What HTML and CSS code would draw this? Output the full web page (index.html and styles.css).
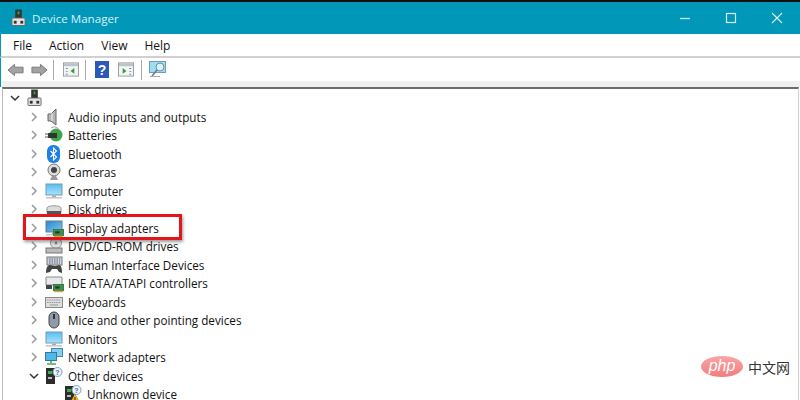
FILE: index.html
```html
<!DOCTYPE html>
<html lang="en">
<head>
  <meta charset="UTF-8" />
  <title>Device Manager</title>
  <link rel="stylesheet" href="styles.css">
</head>
<body>
  <svg class="defs" width="0" height="0">
    <defs>
      <linearGradient id="screen" x1="0" y1="0" x2="0" y2="1">
        <stop offset="0" stop-color="#59bdf0"/>
        <stop offset="1" stop-color="#a9e2fa"/>
      </linearGradient>
      <linearGradient id="screen-dark" x1="0" y1="0" x2="1" y2="1">
        <stop offset="0" stop-color="#2a86cf"/>
        <stop offset="1" stop-color="#7cc9f0"/>
      </linearGradient>
      <linearGradient id="php-fill" x1="0" y1="0" x2="0" y2="1">
        <stop offset="0" stop-color="#f9a5a5"/>
        <stop offset="1" stop-color="#f27d7d"/>
      </linearGradient>
      <symbol id="pc" viewBox="0 0 16 18">
        <rect x="4.500" y="0" width="7" height="9" fill="#333"/>
        <rect x="7" y="2" width="2" height="3" fill="#2ea84a"/>
        <rect x="1" y="9" width="14" height="8" rx="1" fill="#e4e4e4" stroke="#666"/>
        <rect x="3" y="12" width="3" height="3" fill="#333"/>
        <rect x="10" y="12" width="3" height="3" fill="#333"/>
      </symbol>
      <symbol id="monitor" viewBox="0 0 18 18">
        <rect x="1" y="2" width="16" height="11" fill="url(#screen)" stroke="#6f9db8"/>
        <rect x="7" y="13.500" width="4" height="1.500" fill="#aaa"/>
        <rect x="1" y="15" width="16" height="1.500" fill="#c6c6c6"/>
      </symbol>
      <symbol id="monitor-dark" viewBox="0 0 18 18">
        <rect x="1" y="2" width="16" height="11" fill="url(#screen-dark)" stroke="#5c7f99"/>
        <rect x="7" y="13.500" width="4" height="1.500" fill="#aaa"/>
        <rect x="1" y="15" width="16" height="1.500" fill="#c6c6c6"/>
      </symbol>
      <symbol id="card" viewBox="0 0 10 8">
        <rect x="0" y="0" width="10" height="6" fill="#3f8f4f" stroke="#2b5d35" stroke-width=".6"/>
        <rect x="2" y="2" width="4" height="2" fill="#1f3d24"/>
        <rect x="1" y="6" width="8" height="1.400" fill="#d3a93a"/>
      </symbol>
      <symbol id="chip" viewBox="0 0 18 18">
        <path d="M1 3h16v8H1z" fill="#e8e8e8" stroke="#8a8a8a"/>
        <rect x="1" y="11" width="6" height="4" fill="#444"/>
      </symbol>
      <symbol id="tower" viewBox="0 0 18 18">
        <rect x="1" y="1" width="9" height="16" fill="#2c2c2c"/>
        <rect x="3" y="4" width="4" height="3" fill="#36b24f"/>
        <rect x="3" y="10" width="4" height="2" fill="#bbb"/>
        <circle cx="12.500" cy="5" r="4.500" fill="#eef5fb" stroke="#7f9fc0"/>
        <text x="12.500" y="7.600" class="mark">?</text>
      </symbol>
    </defs>
  </svg>

  <div class="title-bar">
    <svg class="title-icon" width="15" height="18"><use href="#pc"/></svg>
    <span class="title-text">Device Manager</span>
    <div class="win-btns">
      <svg width="12" height="12" viewBox="0 0 12 12"><path d="M1 6.500h10" stroke="#bfe6f0" stroke-width="1.400"/></svg>
      <svg width="12" height="12" viewBox="0 0 12 12"><rect x="1.500" y="1.500" width="9" height="9" fill="none" stroke="#d4eff5" stroke-width="1.200"/></svg>
      <svg width="12" height="12" viewBox="0 0 12 12"><path d="M1 1l10 10M11 1L1 11" stroke="#e6f6f9" stroke-width="1.100"/></svg>
    </div>
  </div>

  <div class="menu-bar">
    <span>File</span><span>Action</span><span>View</span><span>Help</span>
  </div>

  <div class="tool-bar">
    <svg class="tool-prev" width="17" height="14" viewBox="0 0 18 14"><path d="M1 7l7-6v3h9v6H8v3z" fill="#a3a3a3" stroke="#777"/></svg>
    <svg class="tool-next" width="17" height="14" viewBox="0 0 18 14"><path d="M17 7l-7-6v3H1v6h9v3z" fill="#a3a3a3" stroke="#777"/></svg>
    <i class="tool-sep"></i>
    <svg class="tool-pane" width="16" height="15" viewBox="0 0 17 15"><rect x=".5" y=".5" width="16" height="14" fill="#f4f4f4" stroke="#999"/><rect x="1" y="1" width="15" height="3" fill="#b9c4cc"/><path d="M12 6v6L8 9z" fill="#2f9e44"/><path d="M3 6h2v1H3zM3 9h2v1H3zM3 12h2v1H3z" fill="#6a8aa5"/></svg>
    <i class="tool-sep"></i>
    <svg class="tool-help" width="14" height="17" viewBox="0 0 14 17"><rect width="14" height="17" fill="#2c58b8"/><text x="7" y="13.500" class="help">?</text></svg>
    <svg class="tool-pane-b" width="16" height="15" viewBox="0 0 17 15"><rect x=".5" y=".5" width="16" height="14" fill="#f4f4f4" stroke="#999"/><rect x="1" y="1" width="15" height="3" fill="#b9c4cc"/><path d="M5 6v6l4-3z" fill="#2f9e44"/><path d="M12 6h2v1h-2zM12 9h2v1h-2zM12 12h2v1h-2z" fill="#6a8aa5"/></svg>
    <i class="tool-sep tool-sep-last"></i>
    <svg width="18" height="17" viewBox="0 0 18 17"><rect x=".5" y=".5" width="16" height="11" fill="#9fdcf5" stroke="#6f9fb5"/><circle cx="11" cy="6" r="4" fill="#d8f1fb" stroke="#6f8fa5"/><path d="M8 9l-5 6" stroke="#777" stroke-width="1.500"/><path d="M1 15.500h10" stroke="#aaa"/></svg>
  </div>

  <div class="tool-band"></div>

  <div class="tree">
    <div class="row root">
      <svg class="arrow" width="10" height="10" viewBox="0 0 10 10"><path d="M1 3l4 4 4-4" class="chev-dark"/></svg>
      <svg width="15" height="18"><use href="#pc"/></svg>
    </div>
    <div class="row">
      <svg class="arrow" width="10" height="10" viewBox="0 0 10 10"><path d="M3 1l4 4-4 4" class="chev"/></svg>
      <svg class="icon" width="18" height="18" viewBox="0 0 18 18"><path d="M3 6h3l5-5v16l-5-4H3z" fill="#b5b5b5" stroke="#666"/><path d="M7 5v8" stroke="#eee"/></svg>
      <span>Audio inputs and outputs</span>
    </div>
    <div class="row">
      <svg class="arrow" width="10" height="10" viewBox="0 0 10 10"><path d="M3 1l4 4-4 4" class="chev"/></svg>
      <svg class="icon" width="18" height="18" viewBox="0 0 18 18"><circle cx="11" cy="9" r="6.500" fill="#3fa548"/><rect x="3" y="7" width="9" height="5" fill="#333"/><path d="M0 8h4M0 11h4" stroke="#555"/><path d="M6 2c3-2 7-1 8 2" fill="none" stroke="#999"/></svg>
      <span>Batteries</span>
    </div>
    <div class="row">
      <svg class="arrow" width="10" height="10" viewBox="0 0 10 10"><path d="M3 1l4 4-4 4" class="chev"/></svg>
      <svg class="icon" width="18" height="18" viewBox="0 0 18 18"><rect x="2" y="0" width="13" height="18" rx="6" fill="#1f7fe8"/><path d="M5.500 6l6 6-3 3V3l3 3-6 6" fill="none" stroke="#fff" stroke-width="1.100"/></svg>
      <span>Bluetooth</span>
    </div>
    <div class="row">
      <svg class="arrow" width="10" height="10" viewBox="0 0 10 10"><path d="M3 1l4 4-4 4" class="chev"/></svg>
      <svg class="icon" width="18" height="18" viewBox="0 0 18 18"><circle cx="9" cy="7" r="6" fill="#ddd" stroke="#777"/><circle cx="9" cy="7" r="3" fill="#444"/><path d="M5 17h8l-2-4H7z" fill="#999"/></svg>
      <span>Cameras</span>
    </div>
    <div class="row">
      <svg class="arrow" width="10" height="10" viewBox="0 0 10 10"><path d="M3 1l4 4-4 4" class="chev"/></svg>
      <svg class="icon" width="18" height="18"><use href="#monitor"/></svg>
      <span>Computer</span>
    </div>
    <div class="row">
      <svg class="arrow" width="10" height="10" viewBox="0 0 10 10"><path d="M3 1l4 4-4 4" class="chev"/></svg>
      <svg class="icon" width="18" height="18" viewBox="0 0 18 18"><path d="M2 8c0-3 14-3 14 0v5H2z" fill="#ddd" stroke="#999"/><rect x="2" y="11" width="14" height="4" fill="#555"/></svg>
      <span>Disk drives</span>
    </div>
    <div class="row">
      <svg class="arrow" width="10" height="10" viewBox="0 0 10 10"><path d="M3 1l4 4-4 4" class="chev"/></svg>
      <span class="icon-stack">
        <svg width="18" height="18"><use href="#monitor-dark"/></svg>
        <svg class="card-badge" width="11" height="9"><use href="#card"/></svg>
      </span>
      <span>Display adapters</span>
    </div>
    <div class="row">
      <svg class="arrow" width="10" height="10" viewBox="0 0 10 10"><path d="M3 1l4 4-4 4" class="chev"/></svg>
      <svg class="icon" width="18" height="18" viewBox="0 0 18 18"><circle cx="11" cy="6" r="5.500" fill="#ddd" stroke="#999"/><circle cx="11" cy="6" r="1.500" fill="#888"/><rect x="1" y="11" width="16" height="5" fill="#bbb" stroke="#777"/></svg>
      <span>DVD/CD-ROM drives</span>
    </div>
    <div class="row">
      <svg class="arrow" width="10" height="10" viewBox="0 0 10 10"><path d="M3 1l4 4-4 4" class="chev"/></svg>
      <svg class="icon" width="18" height="18" viewBox="0 0 18 18"><rect x="2" y="1" width="15" height="8" fill="#c9d3db" stroke="#777"/><path d="M4 3h11M4 5h11M4 7h11" stroke="#667" stroke-dasharray="1.500 1"/><path d="M1 17c0-6 2-8 4-8s3 1 5 1 3-1 4-1c2 0 3 3 3 8l-3-1-2-3H7l-2 3z" fill="#444"/></svg>
      <span>Human Interface Devices</span>
    </div>
    <div class="row">
      <svg class="arrow" width="10" height="10" viewBox="0 0 10 10"><path d="M3 1l4 4-4 4" class="chev"/></svg>
      <span class="icon-stack">
        <svg width="18" height="18"><use href="#chip"/></svg>
        <svg class="card-badge" width="11" height="9"><use href="#card"/></svg>
      </span>
      <span>IDE ATA/ATAPI controllers</span>
    </div>
    <div class="row">
      <svg class="arrow" width="10" height="10" viewBox="0 0 10 10"><path d="M3 1l4 4-4 4" class="chev"/></svg>
      <svg class="icon" width="18" height="18" viewBox="0 0 18 18"><rect x=".5" y="4.500" width="17" height="10" fill="#dedede" stroke="#888"/><path d="M2 7h14M2 9.500h14" stroke="#999" stroke-dasharray="1.500 .8"/><path d="M5 12h8" stroke="#999"/></svg>
      <span>Keyboards</span>
    </div>
    <div class="row">
      <svg class="arrow" width="10" height="10" viewBox="0 0 10 10"><path d="M3 1l4 4-4 4" class="chev"/></svg>
      <svg class="icon" width="18" height="18" viewBox="0 0 18 18"><rect x="4" y="1" width="10" height="16" rx="5" fill="#8e9aa8" stroke="#444"/><rect x="8" y="3" width="2" height="5" fill="#333"/></svg>
      <span>Mice and other pointing devices</span>
    </div>
    <div class="row">
      <svg class="arrow" width="10" height="10" viewBox="0 0 10 10"><path d="M3 1l4 4-4 4" class="chev"/></svg>
      <svg class="icon" width="18" height="18"><use href="#monitor"/></svg>
      <span>Monitors</span>
    </div>
    <div class="row">
      <svg class="arrow" width="10" height="10" viewBox="0 0 10 10"><path d="M3 1l4 4-4 4" class="chev"/></svg>
      <svg class="icon" width="18" height="18" viewBox="0 0 18 18"><rect x="6.500" y=".5" width="11" height="8" fill="#7fd0f5" stroke="#4d86a8"/><rect x=".5" y="4.500" width="11" height="8" fill="#4db8ec" stroke="#3c7799"/><path d="M6 13v2M2 16h9" stroke="#3fae4a" stroke-width="1.500"/></svg>
      <span>Network adapters</span>
    </div>
    <div class="row">
      <svg class="arrow" width="10" height="10" viewBox="0 0 10 10"><path d="M1 3l4 4 4-4" class="chev-dark"/></svg>
      <svg class="icon" width="18" height="18"><use href="#tower"/></svg>
      <span>Other devices</span>
    </div>
    <div class="row child">
      <span class="icon-stack">
        <svg width="18" height="18"><use href="#tower"/></svg>
        <svg class="warn-badge" width="10" height="9" viewBox="0 0 10 9"><path d="M5 0l5 9H0z" fill="#f6c026" stroke="#8a6a10" stroke-width=".5"/><path d="M5 3v3M5 7v1" stroke="#222"/></svg>
      </span>
      <span>Unknown device</span>
    </div>
  </div>

  <div class="highlight"></div>

  <div class="php-mark">
    <span class="php-oval">php</span>
    <span class="php-cn">中文网</span>
  </div>
</body>
</html>
```

FILE: styles.css
```css
html, body {
  margin: 0;
  height: 400px;
  overflow: hidden;
}
body {
  position: relative;
  font-family: "Open Sans", "Noto Sans", sans-serif;
  font-size: 11.7px;
  color: #111;
  background: #fff;
  border-top: 2px solid #111;
  box-sizing: border-box;
}
.defs {
  position: absolute;
}
.mark {
  font-family: "Liberation Sans", sans-serif;
  font-size: 7px;
  font-weight: bold;
  fill: #3a6ea5;
  text-anchor: middle;
}
.help {
  font-family: "Liberation Sans", sans-serif;
  font-size: 14px;
  font-weight: bold;
  fill: #fff;
  text-anchor: middle;
}
.title-bar {
  display: flex;
  align-items: center;
  height: 32px;
  padding-left: 11px;
  background: #0097b9;
  color: #d8f2f8;
}
.title-text {
  margin-left: 6px;
  font-size: 11.6px;
}
.win-btns {
  display: flex;
  gap: 34px;
  margin-left: auto;
  margin-right: 17px;
}
.menu-bar {
  display: flex;
  gap: 17px;
  align-items: center;
  height: 22px;
  padding-left: 12px;
  font-size: 12px;
  border-left: 1px solid #0097b9;
  border-bottom: 2px solid #d0d0d0;
}
.tool-bar {
  display: flex;
  align-items: center;
  height: 23px;
  padding-left: 6px;
  border-left: 1px solid #0097b9;
}
.tool-prev {
  margin-right: 7px;
}
.tool-next {
  margin-right: 5px;
}
.tool-pane {
  margin-right: 6px;
}
.tool-help {
  margin-right: 9px;
}
.tool-pane-b {
  margin-right: 7px;
}
.tool-sep {
  width: 1px;
  height: 20px;
  margin-right: 9px;
  background: #aaa;
}
.tool-sep-last {
  margin-right: 7px;
}
.tool-band {
  height: 6px;
  background: #f0f0f0;
  border-left: 1px solid #0097b9;
}
.tree {
  margin-left: 2px;
  margin-right: 1px;
  height: 320px;
  border-top: 2px solid #6d6d6d;
  border-left: 1px solid #bbb;
  border-right: 1px solid #d0d0d0;
}
.row {
  display: flex;
  align-items: center;
  height: 18.5px;
  padding-left: 26px;
  white-space: nowrap;
}
.row .arrow {
  margin-right: 6px;
  flex: none;
}
.row.root {
  padding-left: 7px;
}
.row.root .arrow {
  margin-right: 7px;
}
.row.child {
  padding-left: 61px;
}
.chev {
  fill: none;
  stroke: #999;
  stroke-width: 1.5;
}
.chev-dark {
  fill: none;
  stroke: #333;
  stroke-width: 1.5;
}
.icon {
  flex: none;
  margin-right: 5px;
}
.icon-stack {
  position: relative;
  flex: none;
  width: 18px;
  height: 18px;
  margin-right: 5px;
}
.card-badge {
  position: absolute;
  right: -1px;
  bottom: -1px;
}
.warn-badge {
  position: absolute;
  right: 2px;
  bottom: 0;
}
.highlight {
  position: absolute;
  left: 23px;
  top: 212px;
  width: 153px;
  height: 20px;
  border: 3px solid #e5141b;
  box-shadow: 1px 2px 3px rgba(0, 0, 0, 0.4);
}
.php-mark {
  position: absolute;
  left: 701px;
  top: 354px;
  display: flex;
  align-items: center;
  gap: 5px;
}
.php-oval {
  width: 42px;
  height: 21px;
  border-radius: 50%;
  background: linear-gradient(#f9a5a5, #f27d7d);
  color: #fff;
  font-family: "Liberation Sans", sans-serif;
  font-size: 16px;
  font-style: italic;
  line-height: 19px;
  text-align: center;
}
.php-cn {
  font-family: "Noto Sans CJK SC", sans-serif;
  font-size: 14px;
  color: #333;
}
```
